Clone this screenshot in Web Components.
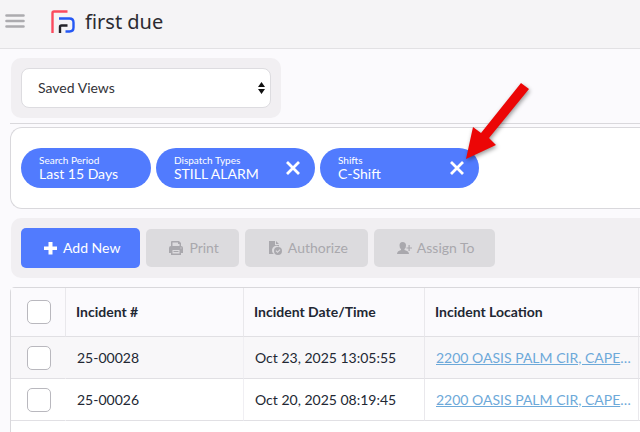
<!DOCTYPE html>
<html lang="en">
<head>
  <meta charset="utf-8">
  <meta name="viewport" content="width=device-width, initial-scale=1">
  <title>First Due - Incidents</title>
  <style>
    body {
      margin: 0;
      overflow: hidden;
      background: #fbfafd;
      color: #222733;
      font: 14px/20px Lato, "Liberation Sans", sans-serif;
    }
  </style>
</head>
<body>
  <incidents-page></incidents-page>

  <script>
    class AppHeader extends HTMLElement {
      connectedCallback() {
        this.attachShadow({ mode: 'open' });
        this.shadowRoot.innerHTML = `
          <style>
            :host {
              display: flex;
              align-items: center;
              gap: 26px;
              height: 48px;
              padding: 0 5px;
              background: #f5f4f6;
              border-bottom: 1px solid #e2e1e4;
            }
            button {
              display: flex;
              padding: 0;
              border: 0;
              background: none;
              margin-bottom: 6px;
            }
            .brand {
              display: flex;
              align-items: center;
              gap: 10px;
              margin-bottom: 5px;
              color: #2c2b31;
              font: 20px/28px "Noto Sans", "Open Sans", sans-serif;
              text-decoration: none;
            }
          </style>
          <button type="button" aria-label="Menu">
            <svg width="20" height="16" viewBox="0 0 20 16" stroke="#acabaf" stroke-width="2.6" stroke-linecap="round">
              <path d="M1.5 2.5h17M1.5 8h17M1.5 13.5h17"/>
            </svg>
          </button>
          <a class="brand" href="#">
            <svg width="24" height="23" viewBox="0 0 24 23" fill="none" stroke-width="2.4">
              <path stroke="#fb4a5e" d="M1.500 23V3Q1.500 1.500 3 1.500H16.500"/>
              <path stroke="#2558f5" d="M8 8.500H18.500Q22.500 8.500 22.500 12.500V17.500Q22.500 21.500 18.500 21.500H14.500"/>
              <path stroke="#242329" d="M9 23V17Q9 15.500 10.500 15.500H16.500"/>
            </svg>
            <span>first due</span>
          </a>
        `;
      }
    }

    class ToolPanel extends HTMLElement {
      connectedCallback() {
        this.attachShadow({ mode: 'open' });
        this.shadowRoot.innerHTML = `
          <style>
            :host {
              display: flex;
              align-items: center;
              gap: 6px;
              padding: 10px;
              border-radius: 10px;
              background: #f1eff2;
            }
          </style>
          <slot></slot>
        `;
      }
    }

    class ViewSelect extends HTMLElement {
      connectedCallback() {
        this.attachShadow({ mode: 'open' });
        this.shadowRoot.innerHTML = `
          <style>
            :host {
              display: grid;
              align-items: center;
              width: 250px;
            }
            select, svg {
              grid-area: 1 / 1;
            }
            select {
              appearance: none;
              width: 100%;
              height: 40px;
              padding: 0 16px;
              border: 1px solid #dddce0;
              border-radius: 8px;
              background: #fff;
              color: #333338;
              font: inherit;
            }
            svg {
              justify-self: end;
              margin-right: 6px;
              pointer-events: none;
            }
          </style>
          <select aria-label="Saved Views">
            <option>Saved Views</option>
          </select>
          <svg width="7" height="12" viewBox="0 0 7 12" fill="#111">
            <path d="M3.5 0L7 5H0zM0 7h7L3.5 12z"/>
          </svg>
        `;
      }
    }

    class FilterChip extends HTMLElement {
      connectedCallback() {
        const close = this.hasAttribute('removable') ? `
          <button type="button" aria-label="Remove filter">
            <svg width="14" height="14" viewBox="0 0 14 14" stroke="#fff" stroke-width="2.8">
              <path d="M1 1L13 13M13 1L1 13"/>
            </svg>
          </button>` : '';
        this.attachShadow({ mode: 'open' });
        this.shadowRoot.innerHTML = `
          <style>
            :host {
              display: flex;
              align-items: center;
              justify-content: space-between;
              box-sizing: border-box;
              min-width: 130px;
              height: 40px;
              padding: 0 15px 0 18px;
              border-radius: 20px;
              background: #517bfe;
              color: #fff;
            }
            :host([removable]) {
              min-width: 159px;
            }
            .label {
              font-size: 10px;
              line-height: 12px;
            }
            .value {
              line-height: 16px;
            }
            button {
              display: flex;
              padding: 0;
              border: 0;
              background: none;
            }
          </style>
          <div>
            <div class="label"><slot name="label"></slot></div>
            <div class="value"><slot></slot></div>
          </div>
          ${close}
        `;
      }
    }

    class FilterBar extends HTMLElement {
      connectedCallback() {
        this.attachShadow({ mode: 'open' });
        this.shadowRoot.innerHTML = `
          <style>
            :host {
              display: flex;
              gap: 5px;
              padding: 20px 10px;
              border: 1px solid #d9d8dc;
              border-right: 0;
              border-radius: 12px 0 0 12px;
              background: #fff;
            }
          </style>
          <slot></slot>
        `;
      }
    }

    const ICONS = {
      add: '<path d="M5.500 1h4v4.500h4.500v3.500H9.500v4.500h-4V9H1V5.500h4.500z"/>',
      print: '<path fill-rule="evenodd" d="M3 0h7l2 2v3q2 0 2 2v5h-2v2H2v-2H0V7q0-2 2-2V1q0-1 1-1zM3.500 1.500V5h7V3H9V1.500zM3.500 9v3.500h7V9zM11.500 6.500v1h1v-1z"/><path d="M4.500 10h5v1h-5z"/>',
      authorize: '<path d="M1 0h6v4h4v1.500A4.500 4.500 0 0 0 6 13H1zM8 0l3 3H8z"/><path fill-rule="evenodd" d="M10 6a4 4 0 1 1 0 8a4 4 0 0 1 0-8zM7.500 10l2 2l3-3l-.8-.8l-2.200 2.200l-1.200-1.200z"/>',
      assign: '<path d="M5.500 1Q9 1 9 4.500Q9 7 7.500 8v1Q12 10 12 13H0Q0 10 4 9V8Q2.500 7 2.500 4.500Q2.500 1 5.500 1z"/><path d="M11.500 4h1.200v2.400H15v1.200h-2.300V10h-1.200V7.600H9.500V6.400h2z"/>'
    };

    class ToolButton extends HTMLElement {
      connectedCallback() {
        this.attachShadow({ mode: 'open' });
        this.shadowRoot.innerHTML = `
          <style>
            :host {
              display: block;
            }
            button {
              display: flex;
              align-items: center;
              gap: 5px;
              height: 40px;
              padding: 0 20px 0 22px;
              border: 0;
              border-radius: 5px;
              background: #517bfe;
              color: #fff;
              font: inherit;
            }
            button:disabled {
              height: 38px;
              padding-left: 23px;
              background: #dcdbde;
              color: #a9a8ad;
            }
          </style>
          <button type="button" ${this.hasAttribute('disabled') ? 'disabled' : ''}>
            <svg width="15" height="14" viewBox="0 0 15 14" fill="currentColor">${ICONS[this.getAttribute('icon')]}</svg>
            <span><slot></slot></span>
          </button>
        `;
      }
    }

    const INCIDENTS = [
      { id: '25-00028', date: 'Oct 23, 2025 13:05:55', location: '2200 OASIS PALM CIR, CAPE' },
      { id: '25-00026', date: 'Oct 20, 2025 08:19:45', location: '2200 OASIS PALM CIR, CAPE' }
    ];

    class IncidentTable extends HTMLElement {
      connectedCallback() {
        const rows = INCIDENTS.map((item) => `
          <tr>
            <td><input type="checkbox" aria-label="Select ${item.id}"></td>
            <td>${item.id}</td>
            <td>${item.date}</td>
            <td class="location"><a href="#">${item.location}</a>…</td>
            <td></td>
          </tr>`).join('');
        this.attachShadow({ mode: 'open' });
        this.shadowRoot.innerHTML = `
          <style>
            :host {
              display: block;
              min-height: 160px;
              border: 1px solid #d9d8dc;
              border-right: 0;
              border-radius: 5px 0 0 0;
              background: #fff;
            }
            table {
              width: 100%;
              border-spacing: 0;
              table-layout: fixed;
            }
            th, td {
              box-sizing: border-box;
              height: 42px;
              padding: 0 0 0 11px;
              border-bottom: 1px solid #e1e0e4;
              border-right: 1px solid #e9e8ec;
              text-align: left;
              white-space: nowrap;
            }
            th {
              height: 49px;
              padding-left: 10px;
              background: #fbfafd;
              font-weight: 700;
            }
            th:first-child, td:first-child {
              padding: 0 0 0 16px;
            }
            td:first-child, td:nth-child(2) {
              border-right-color: #f0eff3;
            }
            td:first-child {
              border-right-color: transparent;
            }
            th:last-child, td:last-child {
              padding: 0;
              border-right: 0;
            }
            tbody tr:nth-child(odd) {
              background: #f8f7f9;
            }
            .check { width: 55px; }
            .number { width: 178px; }
            .date { width: 181px; }
            .place { width: 214px; }
            input {
              appearance: none;
              display: block;
              box-sizing: border-box;
              width: 24px;
              height: 24px;
              margin: 0;
              border: 1px solid #b9b8be;
              border-radius: 5px;
              background: #fff;
            }
            .location, a {
              color: #6da9d9;
            }
          </style>
          <table>
            <colgroup>
              <col class="check"><col class="number"><col class="date"><col class="place"><col>
            </colgroup>
            <thead>
              <tr>
                <th><input type="checkbox" aria-label="Select all"></th>
                <th>Incident #</th>
                <th>Incident Date/Time</th>
                <th>Incident Location</th>
                <th></th>
              </tr>
            </thead>
            <tbody>${rows}</tbody>
          </table>
        `;
      }
    }

    class PointerArrow extends HTMLElement {
      connectedCallback() {
        this.attachShadow({ mode: 'open' });
        this.shadowRoot.innerHTML = `
          <style>
            :host {
              display: block;
              pointer-events: none;
            }
            svg {
              display: block;
              overflow: visible;
              filter: drop-shadow(1px 2px 2px rgba(0, 0, 0, 0.4));
            }
          </style>
          <svg width="63" height="76" viewBox="0 0 63 76" fill="#ec0606">
            <path d="M55 0L63 6L23 55L30 62L0 76L7 44L15 50z"/>
          </svg>
        `;
      }
    }

    class IncidentsPage extends HTMLElement {
      connectedCallback() {
        this.attachShadow({ mode: 'open' });
        this.shadowRoot.innerHTML = `
          <style>
            :host {
              display: block;
            }
            main {
              display: flow-root;
              padding-left: 10px;
            }
            .views {
              width: fit-content;
              margin: 9px 0 5px 1px;
            }
            .filters {
              position: relative;
              padding-top: 3px;
              border-top: 1px solid #d9d8dc;
            }
            pointer-arrow {
              position: absolute;
              left: 456px;
              top: -41px;
            }
            .actions {
              margin: 9px 0 9px 1px;
              border-radius: 10px 0 0 10px;
            }
          </style>
          <app-header></app-header>
          <main>
            <tool-panel class="views"><view-select></view-select></tool-panel>
            <div class="filters">
              <filter-bar>
                <filter-chip><span slot="label">Search Period</span>Last 15 Days</filter-chip>
                <filter-chip removable><span slot="label">Dispatch Types</span>STILL ALARM</filter-chip>
                <filter-chip removable><span slot="label">Shifts</span>C-Shift</filter-chip>
              </filter-bar>
              <pointer-arrow></pointer-arrow>
            </div>
            <tool-panel class="actions">
              <tool-button icon="add">Add New</tool-button>
              <tool-button icon="print" disabled>Print</tool-button>
              <tool-button icon="authorize" disabled>Authorize</tool-button>
              <tool-button icon="assign" disabled>Assign To</tool-button>
            </tool-panel>
            <incident-table></incident-table>
          </main>
        `;
      }
    }

    customElements.define('app-header', AppHeader);
    customElements.define('tool-panel', ToolPanel);
    customElements.define('view-select', ViewSelect);
    customElements.define('filter-chip', FilterChip);
    customElements.define('filter-bar', FilterBar);
    customElements.define('tool-button', ToolButton);
    customElements.define('incident-table', IncidentTable);
    customElements.define('pointer-arrow', PointerArrow);
    customElements.define('incidents-page', IncidentsPage);
  </script>
</body>
</html>
